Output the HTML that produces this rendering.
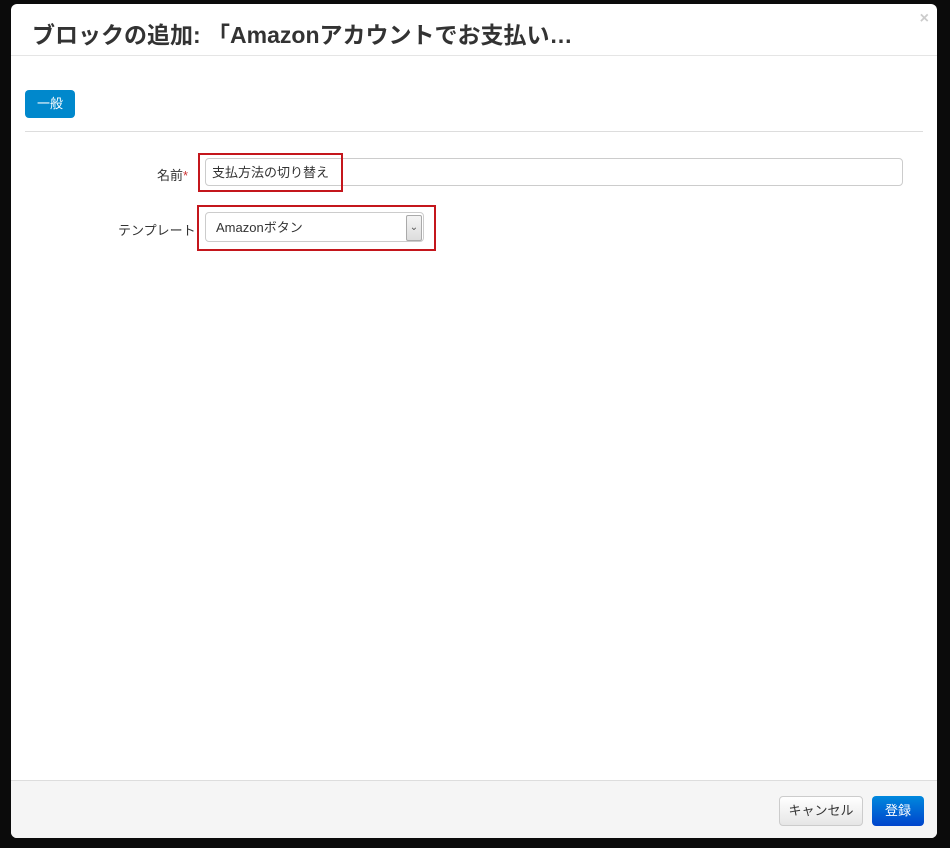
<!DOCTYPE html>
<html><head><meta charset="utf-8"><style>
body{margin:0;width:950px;height:848px;background:#0b0b0b;position:relative;overflow:hidden;font-family:"Liberation Sans","Noto Sans CJK JP",sans-serif;}
.m{position:absolute;left:11px;top:4px;width:926px;height:834px;background:#fff;border-radius:6px;overflow:hidden;}
.hd{height:51px;border-bottom:1px solid #e5e5e5;position:relative;}
.hd h1{margin:0;position:absolute;left:21px;top:12px;font-size:23px;font-weight:bold;color:#333;letter-spacing:0;}
.x{position:absolute;right:8px;top:6px;color:#ccc;font-size:16px;font-weight:bold;}
.tab{position:absolute;left:14px;top:86px;width:50px;height:28px;background:#0088cc;border-radius:4px;color:#fff;font-size:13px;line-height:28px;text-align:center;}
.hr{position:absolute;left:14px;right:14px;top:127px;border-top:1px solid #ddd;}
.lbl{position:absolute;font-size:13px;color:#333;}
.inp{position:absolute;left:194px;top:154px;width:698px;height:28px;border:1px solid #ccc;border-radius:4px;font-size:13px;color:#333;line-height:28px;padding-left:6px;box-sizing:border-box;}
.sel{position:absolute;left:194px;top:208px;width:219px;height:30px;border:1px solid #ccc;border-radius:4px;font-size:13px;color:#333;line-height:30px;padding-left:10px;box-sizing:border-box;}
.arr{position:absolute;right:1px;top:2px;width:14px;height:24px;background:linear-gradient(#f4f4f4,#ddd);border:1px solid #aaa;border-radius:2px;font-size:10px;line-height:24px;text-align:center;color:#555;}
.red{position:absolute;border:2px solid #c4161c;}
.ft{position:absolute;left:0;right:0;bottom:0;height:57px;background:#f5f5f5;border-top:1px solid #ddd;}
.b1{position:absolute;left:768px;top:15px;width:82px;height:28px;border:1px solid #ccc;border-radius:4px;background:linear-gradient(#fff,#e6e6e6);font-size:13px;color:#333;line-height:28px;text-align:center;}
.b2{position:absolute;left:861px;top:15px;width:52px;height:30px;border-radius:4px;background:linear-gradient(#0088dd,#0044cc);font-size:13px;color:#fff;line-height:30px;text-align:center;}
</style></head><body>
<div class="m">
<div class="hd"><h1>ブロックの追加: 「Amazonアカウントでお支払い…</h1><span class="x">×</span></div>
<div class="tab">一般</div>
<div class="hr"></div>
<div class="lbl" style="left:146px;top:161px;">名前<span style="color:#c33;">*</span></div>
<div class="inp">支払方法の切り替え</div>
<div class="red" style="left:187px;top:149px;width:141px;height:35px;"></div>
<div class="lbl" style="left:107px;top:216px;">テンプレート</div>
<div class="sel">Amazonボタン<div class="arr">&#8964;</div></div>
<div class="red" style="left:186px;top:201px;width:235px;height:42px;"></div>
<div class="ft"><div class="b1">キャンセル</div><div class="b2">登録</div></div>
</div>
</body></html>
